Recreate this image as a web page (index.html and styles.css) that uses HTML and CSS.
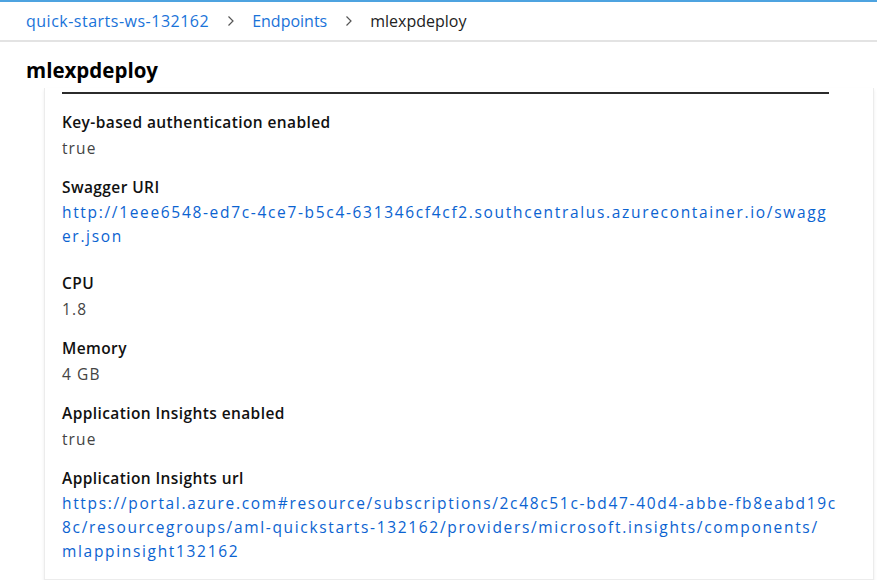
FILE: index.html
```html
<!DOCTYPE html>
<html>
<head>
<meta charset="utf-8">
<link rel="stylesheet" href="styles.css">
</head>
<body>
<div class="topbar">
  <nav class="crumbs">
    <a class="crumb" href="#">quick-starts-ws-132162</a>
    <svg class="chev" width="8" height="12" viewBox="0 0 8 12"><path d="M1.5 1.5 L6 6 L1.5 10.5" fill="none" stroke="#555" stroke-width="1.2"/></svg>
    <a class="crumb" href="#">Endpoints</a>
    <svg class="chev" width="8" height="12" viewBox="0 0 8 12"><path d="M1.5 1.5 L6 6 L1.5 10.5" fill="none" stroke="#555" stroke-width="1.2"/></svg>
    <span class="current">mlexpdeploy</span>
  </nav>
</div>
<h1 class="title">mlexpdeploy</h1>
<div class="card">
  <div class="rule"></div>
  <div class="field">
    <div class="label">Key-based authentication enabled</div>
    <div class="value">true</div>
  </div>
  <div class="field">
    <div class="label">Swagger URI</div>
    <a class="link" href="#"><span class="ln">http://1eee6548-ed7c-4ce7-b5c4-631346cf4cf2.southcentralus.azurecontainer.io/swagg</span><span class="ln">er.json</span></a>
  </div>
  <div class="field gap">
    <div class="label">CPU</div>
    <div class="value">1.8</div>
  </div>
  <div class="field">
    <div class="label">Memory</div>
    <div class="value">4 GB</div>
  </div>
  <div class="field">
    <div class="label">Application Insights enabled</div>
    <div class="value">true</div>
  </div>
  <div class="field">
    <div class="label">Application Insights url</div>
    <a class="link" href="#"><span class="ln">https://portal.azure.com#resource/subscriptions/2c48c51c-bd47-40d4-abbe-fb8eabd19c</span><span class="ln">8c/resourcegroups/aml-quickstarts-132162/providers/microsoft.insights/components/</span><span class="ln">mlappinsight132162</span></a>
  </div>
</div>
</body>
</html>
```
FILE: styles.css
```css
html, body {
  margin: 0;
  padding: 0;
  background: #fff;
  font-family: "Open Sans", "Noto Sans", sans-serif;
  overflow: hidden;
}
.topbar {
  border-top: 2px solid #4da3e0;
  border-bottom: 2px solid #e3e3e3;
  height: 38px;
  display: flex;
  align-items: center;
  padding-left: 26px;
}
.crumbs {
  display: flex;
  align-items: center;
  font-size: 16px;
}
.crumb {
  color: #1a73d9;
  text-decoration: none;
}
.crumb:first-child {
  letter-spacing: 0.5px;
}
.chev {
  margin: 0 17px 0 18px;
}
.current {
  color: #222;
}
.title {
  margin: 0;
  padding: 14px 0 0 26px;
  height: 32px;
  font-size: 20.5px;
  font-weight: 700;
  color: #000;
  line-height: 28px;
}
.card {
  margin-left: 44px;
  width: 830px;
  border: 1px solid #ececec;
  border-top: none;
  box-shadow: 0 2px 3px rgba(0,0,0,0.08);
  padding: 4px 44px 0 17px;
  box-sizing: border-box;
  height: 492px;
}
.rule {
  height: 2px;
  background: #2b2b2b;
  width: 767px;
  margin-bottom: 15px;
}
.field {
  margin-bottom: 13px;
  font-size: 15.5px;
  line-height: 26px;
}
.field.gap {
  margin-top: 22px;
}
.label {
  font-weight: 600;
  color: #111;
  letter-spacing: 0.4px;
}
.value {
  color: #444;
  letter-spacing: 1.1px;
}
.link {
  color: #0b63d1;
  text-decoration: none;
  display: block;
  line-height: 24px;
  letter-spacing: 1.67px;
}
.ln {
  display: block;
  white-space: nowrap;
}
```
